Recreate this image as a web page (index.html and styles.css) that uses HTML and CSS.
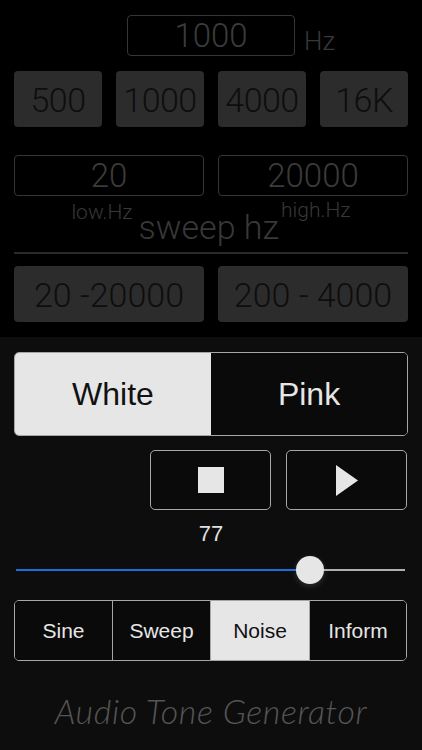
FILE: index.html
```html
<!DOCTYPE html>
<html>
<head>
<meta charset="utf-8">
<link rel="stylesheet" href="styles.css">
</head>
<body>
<div class="app">
  <section class="top">
    <div class="freq-row">
      <div></div>
      <div class="freq-box">1000</div>
      <div class="freq-unit">Hz</div>
    </div>
    <div class="presets">
      <div class="preset">500</div>
      <div class="preset">1000</div>
      <div class="preset">4000</div>
      <div class="preset">16K</div>
    </div>
    <div class="sweep-inputs">
      <div class="sweep-box">20</div>
      <div class="sweep-box">20000</div>
    </div>
    <div class="sweep-labels">
      <span class="small-label">low.Hz</span>
      <span class="sweep-title">sweep hz</span>
      <span class="small-label">high.Hz</span>
    </div>
    <div class="divider"></div>
    <div class="ranges">
      <div class="range">20 -20000</div>
      <div class="range">200 - 4000</div>
    </div>
  </section>
  <section class="bottom">
    <div class="noise-seg">
      <div class="seg-item active">White</div>
      <div class="seg-item">Pink</div>
    </div>
    <div class="transport">
      <div class="t-btn">
        <svg width="26" height="26" viewBox="0 0 26 26"><rect x="0" y="0" width="26" height="26" fill="#e6e6e6"/></svg>
      </div>
      <div class="t-btn">
        <svg width="22" height="31" viewBox="0 0 22 31"><polygon points="0,0 22,15.5 0,31" fill="#e6e6e6"/></svg>
      </div>
    </div>
    <div class="volume">77</div>
    <div class="slider">
      <div class="track">
        <div class="fill" style="width: 294px"></div>
      </div>
      <div class="thumb" style="left: 280px"></div>
    </div>
    <div class="tabs">
      <div class="tab">Sine</div>
      <div class="tab">Sweep</div>
      <div class="tab active">Noise</div>
      <div class="tab">Inform</div>
    </div>
    <div class="title">Audio Tone Generator</div>
  </section>
</div>
</body>
</html>
```
FILE: styles.css
```css
html, body {
  margin: 0;
  padding: 0;
  background: #0d0d0d;
}
body {
  width: 422px;
  height: 750px;
  overflow: hidden;
  font-family: "Roboto", "Liberation Sans", sans-serif;
}
.app {
  width: 422px;
  height: 750px;
  display: flex;
  flex-direction: column;
}
.top {
  background: #000;
  height: 337px;
  box-sizing: border-box;
  padding: 15px 14px 0 14px;
  display: flex;
  flex-direction: column;
}
.freq-row {
  display: grid;
  grid-template-columns: 1fr 168px 1fr;
  align-items: start;
}
.freq-box {
  height: 41px;
  box-sizing: border-box;
  border: 1px solid #363636;
  border-radius: 4px;
  color: #3b3b3b;
  font-weight: 300;
  font-size: 33px;
  line-height: 39px;
  text-align: center;
}
.freq-unit {
  color: #383838;
  font-weight: 300;
  font-size: 26px;
  line-height: 26px;
  margin: 13px 0 0 9px;
}
.presets {
  margin-top: 15px;
  display: grid;
  grid-template-columns: repeat(4, 1fr);
  gap: 14px;
}
.preset {
  height: 56px;
  background: #2c2c2c;
  border-radius: 4px;
  color: #0e0e0e;
  font-weight: 300;
  font-size: 34px;
  line-height: 58px;
  text-align: center;
  letter-spacing: -0.5px;
}
.sweep-inputs {
  margin-top: 28px;
  display: grid;
  grid-template-columns: 1fr 1fr;
  gap: 14px;
}
.sweep-box {
  height: 41px;
  box-sizing: border-box;
  border: 1px solid #363636;
  border-radius: 4px;
  color: #3b3b3b;
  font-weight: 300;
  font-size: 33px;
  line-height: 40px;
  text-align: center;
}
.sweep-labels {
  display: flex;
  justify-content: center;
  align-items: flex-start;
  height: 56px;
  color: #383838;
  font-weight: 300;
}
.small-label {
  font-size: 21px;
  line-height: 21px;
  margin-top: 6px;
}
.sweep-labels .small-label:last-child {
  margin-top: 4px;
  margin-left: 2px;
}
.sweep-title {
  font-size: 34px;
  line-height: 34px;
  margin-top: 14px;
  margin-left: 6px;
}
.divider {
  height: 2px;
  background: #2a2a2a;
  margin-top: 0;
}
.ranges {
  margin-top: 12px;
  display: grid;
  grid-template-columns: 1fr 1fr;
  gap: 14px;
}
.range {
  height: 56px;
  background: #2c2c2c;
  border-radius: 4px;
  color: #0e0e0e;
  font-weight: 300;
  font-size: 34px;
  line-height: 58px;
  text-align: center;
}
.bottom {
  flex: 1;
  background: #0d0d0d;
  padding: 15px 14px 0 14px;
  display: flex;
  flex-direction: column;
}
.noise-seg {
  display: grid;
  grid-template-columns: 1fr 1fr;
  height: 84px;
  box-sizing: border-box;
  border: 1px solid #a6a6a6;
  border-radius: 5px;
  overflow: hidden;
  font-family: "Liberation Sans", Arial, sans-serif;
  font-size: 32px;
}
.seg-item {
  display: flex;
  align-items: center;
  justify-content: center;
  color: #e6e6e6;
  background: #0a0a0a;
}
.seg-item.active {
  background: #e6e6e6;
  color: #111;
}
.transport {
  margin-top: 14px;
  display: flex;
  justify-content: flex-end;
  gap: 15px;
  padding-right: 1px;
}
.t-btn {
  width: 121px;
  height: 60px;
  box-sizing: border-box;
  border: 1.5px solid #a6a6a6;
  border-radius: 5px;
  background: #0a0a0a;
  display: flex;
  align-items: center;
  justify-content: center;
}
.t-btn svg {
  display: block;
}
.volume {
  margin-top: 12px;
  text-align: center;
  color: #e0e0e0;
  font-family: "Liberation Sans", Arial, sans-serif;
  font-size: 22px;
  line-height: 24px;
}
.slider {
  position: relative;
  height: 30px;
  margin: 9px 3px 0 2px;
}
.track {
  position: relative;
  top: 14px;
  height: 2px;
  background: #b0b0b0;
}
.fill {
  height: 2px;
  background: #1b6fd8;
}
.thumb {
  position: absolute;
  top: 1px;
  width: 28px;
  height: 28px;
  border-radius: 50%;
  background: #e6e6e6;
  box-shadow: 0 2px 6px rgba(255,255,255,0.15);
}
.tabs {
  margin-top: 15px;
  height: 61px;
  box-sizing: border-box;
  border: 1px solid #a6a6a6;
  border-radius: 5px;
  overflow: hidden;
  display: grid;
  grid-template-columns: 97px 98px 99px 1fr;
  margin-right: 1px;
  font-family: "Liberation Sans", Arial, sans-serif;
  font-size: 21px;
}
.tab {
  display: flex;
  align-items: center;
  justify-content: center;
  color: #e6e6e6;
  background: #0a0a0a;
  border-left: 1px solid #a6a6a6;
}
.tab:first-child {
  border-left: none;
}
.tab.active {
  background: #e6e6e6;
  color: #111;
}
.title {
  margin-top: 30px;
  text-align: center;
  color: #555;
  font-family: "Lato", sans-serif;
  font-style: italic;
  font-weight: 300;
  font-size: 34px;
  line-height: 40px;
  letter-spacing: 0.6px;
}
```
